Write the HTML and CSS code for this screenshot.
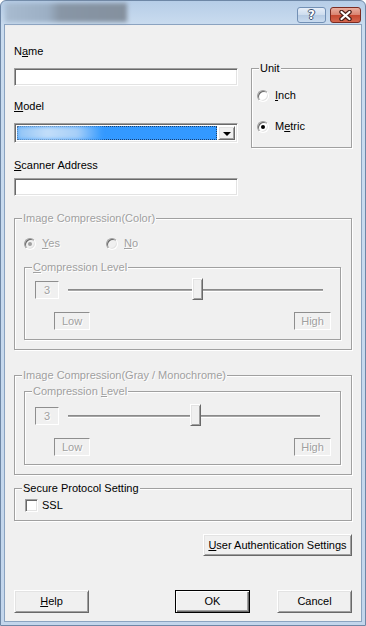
FILE: index.html
```html
<!DOCTYPE html>
<html lang="en">
<head>
  <meta charset="UTF-8">
  <title>Scanner Settings</title>
  <link rel="stylesheet" href="styles.css">
</head>
<body>
  <div class="window">
    <div class="titlebar">
      <div class="title-blur"></div>
      <div class="caption-btn help-btn">?</div>
      <div class="caption-btn close-btn">
        <svg width="13" height="11" viewBox="0 0 13 11">
          <path d="M2.5 2 L10.5 9 M10.5 2 L2.5 9" stroke="#4a1f18" stroke-width="4.5" stroke-linecap="round"/>
          <path d="M2.5 2 L10.5 9 M10.5 2 L2.5 9" stroke="#fff" stroke-width="2.2" stroke-linecap="round"/>
        </svg>
      </div>
    </div>
    <div class="frame">
      <div class="client">
        <div class="top-row">
          <div class="fields">
            <div class="lbl">N<u>a</u>me</div>
            <div class="edit sunken name-edit"></div>
            <div class="lbl model-lbl"><u>M</u>odel</div>
            <div class="combo sunken">
              <div class="combo-value"><div class="combo-blur"></div></div>
              <div class="combo-btn raised"><span class="arrow"></span></div>
            </div>
            <div class="lbl scanner-lbl"><u>S</u>canner Address</div>
            <div class="edit sunken scanner-edit"></div>
          </div>
          <fieldset class="group unit-group">
            <legend>Unit</legend>
            <div class="radio-row"><span class="radio"></span><span><u>I</u>nch</span></div>
            <div class="radio-row metric-row"><span class="radio checked"></span><span>M<u>e</u>tric</span></div>
          </fieldset>
        </div>

        <fieldset class="group color-group disabled">
          <legend>Image Compression(Color)</legend>
          <div class="yes-no">
            <div class="radio-row yes-item"><span class="radio checked"></span><span><u>Y</u>es</span></div>
            <div class="radio-row"><span class="radio"></span><span><u>N</u>o</span></div>
          </div>
          <fieldset class="group level-group">
            <legend><u>C</u>ompression Level</legend>
            <div class="level-row">
              <div class="value-box">3</div>
              <div class="slider color-slider">
                <div class="channel"></div>
                <div class="thumb raised" style="left: 50%"></div>
              </div>
            </div>
            <div class="range-row">
              <div class="value-box low-box">Low</div>
              <div class="value-box high-box">High</div>
            </div>
          </fieldset>
        </fieldset>

        <fieldset class="group gray-group disabled">
          <legend>Image Compression(Gray / Monochrome)</legend>
          <fieldset class="group level-group gray-level">
            <legend>Compression <u>L</u>evel</legend>
            <div class="level-row">
              <div class="value-box">3</div>
              <div class="slider gray-slider">
                <div class="channel"></div>
                <div class="thumb raised" style="left: 50%"></div>
              </div>
            </div>
            <div class="range-row">
              <div class="value-box low-box">Low</div>
              <div class="value-box high-box">High</div>
            </div>
          </fieldset>
        </fieldset>

        <fieldset class="group secure-group">
          <legend>Secure Protocol Setting</legend>
          <div class="check-row"><span class="checkbox sunken"></span><span>SSL</span></div>
        </fieldset>

        <div class="ua-row">
          <div class="btn raised ua-btn"><span><u>U</u>ser Authentication Settings</span></div>
        </div>

        <div class="button-row">
          <div class="btn raised help"><span><u>H</u>elp</span></div>
          <div class="btn default">OK</div>
          <div class="btn raised">Cancel</div>
        </div>
      </div>
    </div>
  </div>
</body>
</html>
```

FILE: styles.css
```css
* {
  box-sizing: border-box;
}

body {
  margin: 0;
  width: 366px;
  height: 626px;
  overflow: hidden;
  background: #fff;
  font-family: "Liberation Sans", Arial, sans-serif;
  font-size: 11px;
  line-height: 13px;
  color: #000;
}

u {
  text-decoration: underline;
  text-underline-offset: 1px;
}

/* window frame */
.window {
  width: 366px;
  height: 626px;
  display: flex;
  flex-direction: column;
  border: 1px solid #6e87a6;
  border-radius: 6px 6px 0 0;
  background: linear-gradient(#b6cde7, #cadcef 24px, #c3d6ec);
}

.titlebar {
  height: 23px;
  flex: none;
  display: flex;
  align-items: flex-start;
  padding: 2px 4px 0 4px;
}

.title-blur {
  width: 122px;
  height: 19px;
  margin-right: auto;
  background: linear-gradient(90deg, #a8bbd0 0, #9cafc4 35%, #8896a6 45%, #84909e 100%);
  filter: blur(2px);
}

.caption-btn {
  height: 16px;
  margin-top: 4px;
  border-radius: 3px;
  display: flex;
  align-items: center;
  justify-content: center;
}

.help-btn {
  width: 29px;
  border: 1px solid #7290b5;
  background: linear-gradient(#e6eef8, #cddcee 50%, #b6cbe3 51%, #c9dbef);
  color: #fff;
  font-family: "DejaVu Sans", sans-serif;
  font-weight: bold;
  font-size: 12px;
  text-shadow: 1px 0 0 #3d5270, -1px 0 0 #3d5270, 0 1px 0 #3d5270, 0 -1px 0 #3d5270;
}

.close-btn {
  width: 31px;
  margin-left: 4px;
  border: 1px solid #7b2c22;
  background: linear-gradient(#eaae9f, #d98370 50%, #c5472f 51%, #d4674f);
}

.frame {
  flex: 1;
  padding: 0 3px 3px;
}

.client {
  height: 100%;
  background: #f0f0f0;
  border: 1px solid #8ba3c0;
  padding: 20px 9px 0 9px;
}

/* 3d edges */
.sunken {
  border: 1px solid;
  border-color: #a0a0a0 #fff #fff #a0a0a0;
  box-shadow: inset 1px 1px 0 #696969, inset -1px -1px 0 #e3e3e3;
  background: #fff;
}

.raised {
  background: #f0f0f0;
  border: 1px solid;
  border-color: #fff #696969 #696969 #fff;
  box-shadow: inset 1px 1px 0 #e3e3e3, inset -1px -1px 0 #a0a0a0;
}

/* top section */
.top-row {
  display: flex;
  justify-content: space-between;
  align-items: flex-start;
}

.fields {
  width: 224px;
}

.lbl {
  height: 13px;
}

.edit {
  height: 18px;
}

.name-edit {
  margin-top: 10px;
}

.model-lbl {
  margin-top: 14px;
}

.combo {
  margin-top: 10px;
  height: 20px;
  padding: 2px;
  display: flex;
}

.combo-value {
  flex: 1;
  overflow: hidden;
  background: #3399ff;
  outline: 1px dotted #1d3f6a;
  outline-offset: -1px;
}

.combo-blur {
  width: 86px;
  height: 100%;
  background: linear-gradient(90deg, #8fc3f6, #c3def9 35%, #a7cff8 70%, #3399ff);
  filter: blur(2px);
}

.combo-btn {
  width: 17px;
  margin-left: 1px;
  display: flex;
  align-items: center;
  justify-content: center;
}

.arrow {
  border-left: 4px solid transparent;
  border-right: 4px solid transparent;
  border-top: 4px solid #000;
  margin-top: 1px;
}

.scanner-lbl {
  margin-top: 16px;
}

.scanner-edit {
  margin-top: 6px;
}

/* group boxes */
.group {
  margin: 0;
  padding: 0;
  min-width: 0;
  border: 1px solid #a0a0a0;
  box-shadow: inset 1px 1px 0 #fff, 1px 1px 0 #fff;
}

.group legend {
  padding: 0 1px;
  line-height: 13px;
  background: #f0f0f0;
}

.unit-group {
  width: 101px;
  height: 86px;
  margin-top: 17px;
  padding: 14px 0 0 5px;
}

.unit-group legend {
  margin-left: 2px;
}

.radio-row {
  display: flex;
  align-items: center;
  height: 13px;
  gap: 6px;
}

.metric-row {
  margin-top: 18px;
}

.radio {
  position: relative;
  flex: none;
  width: 12px;
  height: 12px;
  border-radius: 50%;
  background: #fff;
  border: 1px solid;
  border-color: #a0a0a0 #fff #fff #a0a0a0;
  box-shadow: inset 1px 1px 0 #696969, inset -1px -1px 0 #e3e3e3;
}

.radio.checked::after {
  content: "";
  position: absolute;
  left: 3px;
  top: 3px;
  width: 4px;
  height: 4px;
  border-radius: 50%;
  background: #000;
}

/* disabled look */
.disabled,
.disabled legend {
  color: #a0a0a0;
  text-shadow: 1px 1px 0 #fff;
}

.disabled .radio {
  background: #f0f0f0;
}

.disabled .radio.checked::after {
  background: #a0a0a0;
}

.color-group {
  margin-top: 16px;
  padding: 12px 10px 9px 9px;
}

.color-group > legend,
.gray-group > legend {
  margin-left: -2px;
}

.yes-no {
  display: flex;
}

.yes-item {
  width: 82px;
}

.level-group {
  margin-top: 11px;
  padding: 7px 9px 9px 10px;
}

.level-group legend,
.secure-group legend {
  margin-left: -3px;
}

.level-row {
  display: flex;
  height: 18px;
}

.value-box {
  height: 18px;
  border: 1px solid;
  border-color: #8e8e8e #fff #fff #8e8e8e;
  line-height: 16px;
  text-align: center;
}

.level-row .value-box {
  width: 24px;
}

.slider {
  flex: 1;
  position: relative;
  display: flex;
  align-items: center;
  margin-left: 9px;
}

.color-slider {
  margin-right: 8px;
}

.gray-slider {
  margin-right: 11px;
}

.channel {
  flex: 1;
  height: 3px;
  border-top: 1px solid #8a8a8a;
  border-bottom: 1px solid #fff;
  background: #a6a6a6;
}

.thumb {
  position: absolute;
  top: -3px;
  width: 11px;
  height: 22px;
  margin-left: -4px;
}

.range-row {
  display: flex;
  justify-content: space-between;
  margin-top: 13px;
  padding-left: 19px;
}

.low-box {
  width: 36px;
}

.high-box {
  width: 37px;
}

.gray-group {
  margin-top: 19px;
  padding: 3px 10px 9px 9px;
}

.gray-level {
  margin-top: 0;
  padding: 9px 9px 8px 10px;
}

.secure-group {
  margin-top: 7px;
  padding: 4px 9px 8px 10px;
}

.check-row {
  display: flex;
  align-items: center;
  height: 13px;
  gap: 4px;
}

.checkbox {
  width: 13px;
  height: 13px;
}

/* buttons */
.btn {
  height: 23px;
  width: 75px;
  display: flex;
  align-items: center;
  justify-content: center;
}

.btn.default {
  background: #f0f0f0;
  border: 1px solid #000;
  box-shadow: inset 1px 1px 0 #fff, inset -1px -1px 0 #696969, inset -2px -2px 0 #a0a0a0;
}

.ua-row {
  display: flex;
  justify-content: flex-end;
  margin-top: 13px;
}

.ua-btn {
  width: 149px;
  height: 22px;
}

.button-row {
  display: flex;
  gap: 27px;
  margin-top: 34px;
}

.button-row .help {
  margin-right: auto;
}
```
